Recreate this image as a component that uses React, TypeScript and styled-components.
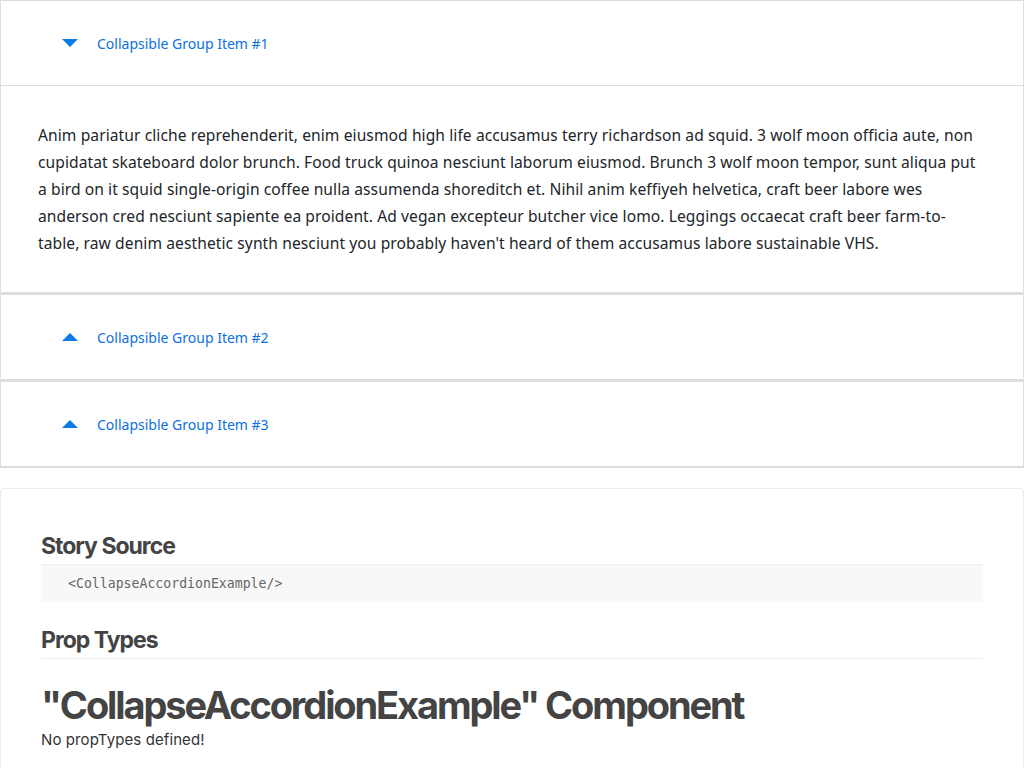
import React from "react";
import styled, { createGlobalStyle } from "styled-components";

const GlobalStyle = createGlobalStyle`
  html, body {
    margin: 0;
    padding: 0;
    background: #fff;
  }
  * {
    box-sizing: border-box;
  }
`;

const Page = styled.div`
  width: 1024px;
  font-family: "Noto Sans", sans-serif;
`;

const Accordion = styled.div`
  display: flex;
  flex-direction: column;
`;

const Card = styled.div`
  border: 1px solid #dedede;
  border-bottom-width: 2px;
  background: #fff;
`;

const CardHeader = styled.div<{ open: boolean }>`
  height: ${({ open }) => (open ? 85 : 84)}px;
  display: flex;
  align-items: center;
  padding-left: 61px;
  gap: 19px;
  border-bottom: ${({ open }) => (open ? "1px solid #dedede" : "none")};
  cursor: pointer;
`;

const Caret = styled.span<{ open: boolean }>`
  width: 0;
  height: 0;
  border-left: 8px solid transparent;
  border-right: 8px solid transparent;
  ${({ open }) =>
    open
      ? "border-top: 8px solid #0a7be6;"
      : "border-bottom: 8px solid #0a7be6;"}
`;

const HeaderTitle = styled.span`
  color: #0b70e3;
  font-size: 14px;
`;

const CardBody = styled.div`
  padding: 36px 40px 35px 37px;
  font-size: 15.6px;
  line-height: 27px;
  color: #212529;
  letter-spacing: 0.08px;
`;

const InfoCard = styled.section`
  margin-top: 20px;
  border: 1px solid #ececec;
  border-radius: 3px;
  padding: 41px 40px 30px;
  font-family: Inter, "Helvetica Neue", sans-serif;
  color: #444;
`;

const SectionTitle = styled.h2<{ underline?: boolean }>`
  margin: 0;
  font-size: 23px;
  font-weight: 700;
  letter-spacing: -1px;
  line-height: 32px;
  padding-bottom: 2px;
  ${({ underline }) => underline && "border-bottom: 1px solid #eee;"}
`;

const CodeBlock = styled.pre`
  margin: 0 0 22px;
  background: #f8f8f8;
  border-top: 1px solid #f0f0f0;
  padding: 11px 27px 10px;
  font-family: "DejaVu Sans Mono", monospace;
  font-size: 13.2px;
  line-height: 16px;
  color: #666;
`;

const ComponentTitle = styled.h1`
  margin: 24px 0 0;
  font-size: 38px;
  font-weight: 700;
  letter-spacing: -2.1px;
  line-height: 44px;
`;

const Note = styled.div`
  margin-top: 3px;
  font-size: 15px;
  letter-spacing: 0.1px;
  color: #333;
  line-height: 20px;
`;

const items = [
  { title: "Collapsible Group Item #1", open: true },
  { title: "Collapsible Group Item #2", open: false },
  { title: "Collapsible Group Item #3", open: false },
];

const bodyText =
  "Anim pariatur cliche reprehenderit, enim eiusmod high life accusamus terry richardson ad squid. 3 wolf moon officia aute, non cupidatat skateboard dolor brunch. Food truck quinoa nesciunt laborum eiusmod. Brunch 3 wolf moon tempor, sunt aliqua put a bird on it squid single-origin coffee nulla assumenda shoreditch et. Nihil anim keffiyeh helvetica, craft beer labore wes anderson cred nesciunt sapiente ea proident. Ad vegan excepteur butcher vice lomo. Leggings occaecat craft beer farm-to-table, raw denim aesthetic synth nesciunt you probably haven't heard of them accusamus labore sustainable VHS.";

export default function App() {
  return (
    <Page>
      <GlobalStyle />
      <Accordion>
        {items.map((item) => (
          <Card key={item.title}>
            <CardHeader open={item.open}>
              <Caret open={item.open} />
              <HeaderTitle>{item.title}</HeaderTitle>
            </CardHeader>
            {item.open && <CardBody>{bodyText}</CardBody>}
          </Card>
        ))}
      </Accordion>
      <InfoCard>
        <SectionTitle>Story Source</SectionTitle>
        <CodeBlock>{"<CollapseAccordionExample/>"}</CodeBlock>
        <SectionTitle underline>Prop Types</SectionTitle>
        <ComponentTitle>"CollapseAccordionExample" Component</ComponentTitle>
        <Note>No propTypes defined!</Note>
      </InfoCard>
    </Page>
  );
}
